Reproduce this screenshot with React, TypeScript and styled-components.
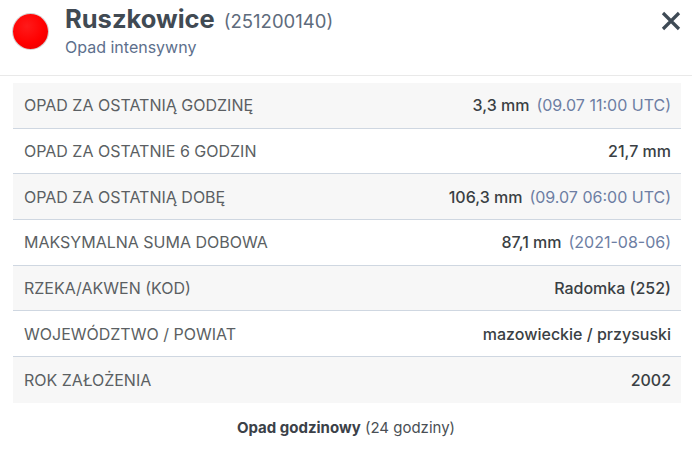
import styled, { createGlobalStyle } from 'styled-components';

const GlobalStyle = createGlobalStyle`
  html, body {
    margin: 0;
    padding: 0;
    background: #fff;
    font-family: Inter, "Noto Sans", sans-serif;
  }
`;

const Panel = styled.div`
  width: 692px;
  height: 458px;
  box-sizing: border-box;
  background: #fff;
`;

const Header = styled.div`
  display: flex;
  align-items: flex-start;
  height: 76px;
  box-sizing: border-box;
  padding: 13px 10px 0 13px;
  border-bottom: 1px solid #e9e9e9;
`;

const Dot = styled.div`
  width: 35px;
  height: 35px;
  margin-top: 1px;
  border-radius: 50%;
  background: radial-gradient(circle at 40% 35%, #ff1a1a 0%, #f00 55%, #e00000 100%);
  box-shadow: 0 0 0 1px rgba(120, 120, 120, 0.35);
  flex-shrink: 0;
`;

const TitleBlock = styled.div`
  display: flex;
  flex-direction: column;
  margin-left: 17px;
  margin-top: -10px;
  flex: 1;
`;

const TitleRow = styled.div`
  display: flex;
  align-items: baseline;
  gap: 9px;
`;

const Name = styled.span`
  font-size: 25.5px;
  font-weight: 700;
  color: #414a53;
`;

const Code = styled.span`
  font-size: 18.5px;
  color: #5e6b7c;
`;

const Subtitle = styled.div`
  font-size: 16px;
  color: #5d6f8c;
  margin-top: 3px;
`;

const Close = styled.button`
  border: 0;
  background: none;
  padding: 0;
  margin-top: -3px;
  cursor: pointer;
  display: flex;
`;

const Table = styled.div`
  margin: 7px 11px 0 13px;
  display: flex;
  flex-direction: column;
`;

const Row = styled.div<{ $shaded: boolean; $last?: boolean }>`
  display: flex;
  align-items: center;
  justify-content: space-between;
  height: 45.7px;
  box-sizing: border-box;
  padding: 0 10px 0 11px;
  background: ${(p) => (p.$shaded ? '#f7f7f7' : '#fff')};
  border-bottom: ${(p) => (p.$last ? 'none' : '1px solid #cfd7e1')};
`;

const Label = styled.span`
  font-size: 16px;
  color: #5b5f63;
  text-transform: uppercase;
`;

const Value = styled.span`
  font-size: 16px;
  font-weight: 500;
  color: #3a3f44;
`;

const Note = styled.span`
  font-weight: 400;
  color: #6d7ea3;
  margin-left: 7px;
`;

const Footer = styled.div`
  text-align: center;
  font-size: 15px;
  color: #4a4f55;
  margin-top: 15px;
  b {
    color: #3b4148;
    font-weight: 700;
  }
`;

const rows = [
  { label: 'Opad za ostatnią godzinę', value: '3,3 mm', note: '(09.07 11:00 UTC)' },
  { label: 'Opad za ostatnie 6 godzin', value: '21,7 mm' },
  { label: 'Opad za ostatnią dobę', value: '106,3 mm', note: '(09.07 06:00 UTC)' },
  { label: 'Maksymalna suma dobowa', value: '87,1 mm', note: '(2021-08-06)' },
  { label: 'Rzeka/akwen (kod)', value: 'Radomka (252)' },
  { label: 'Województwo / powiat', value: 'mazowieckie / przysuski' },
  { label: 'Rok założenia', value: '2002' },
];

const App = () => (
  <>
    <GlobalStyle />
    <Panel>
      <Header>
        <Dot />
        <TitleBlock>
          <TitleRow>
            <Name>Ruszkowice</Name>
            <Code>(251200140)</Code>
          </TitleRow>
          <Subtitle>Opad intensywny</Subtitle>
        </TitleBlock>
        <Close aria-label="Zamknij">
          <svg width="22" height="22" viewBox="0 0 22 22">
            <path d="M3 3 L19 19 M19 3 L3 19" stroke="#3e4a55" strokeWidth="3.2" strokeLinecap="butt" />
          </svg>
        </Close>
      </Header>
      <Table>
        {rows.map((r, i) => (
          <Row key={r.label} $shaded={i % 2 === 0} $last={i === rows.length - 1}>
            <Label>{r.label}</Label>
            <Value>
              {r.value}
              {r.note && <Note>{r.note}</Note>}
            </Value>
          </Row>
        ))}
      </Table>
      <Footer>
        <b>Opad godzinowy</b> (24 godziny)
      </Footer>
    </Panel>
  </>
);

export default App;
